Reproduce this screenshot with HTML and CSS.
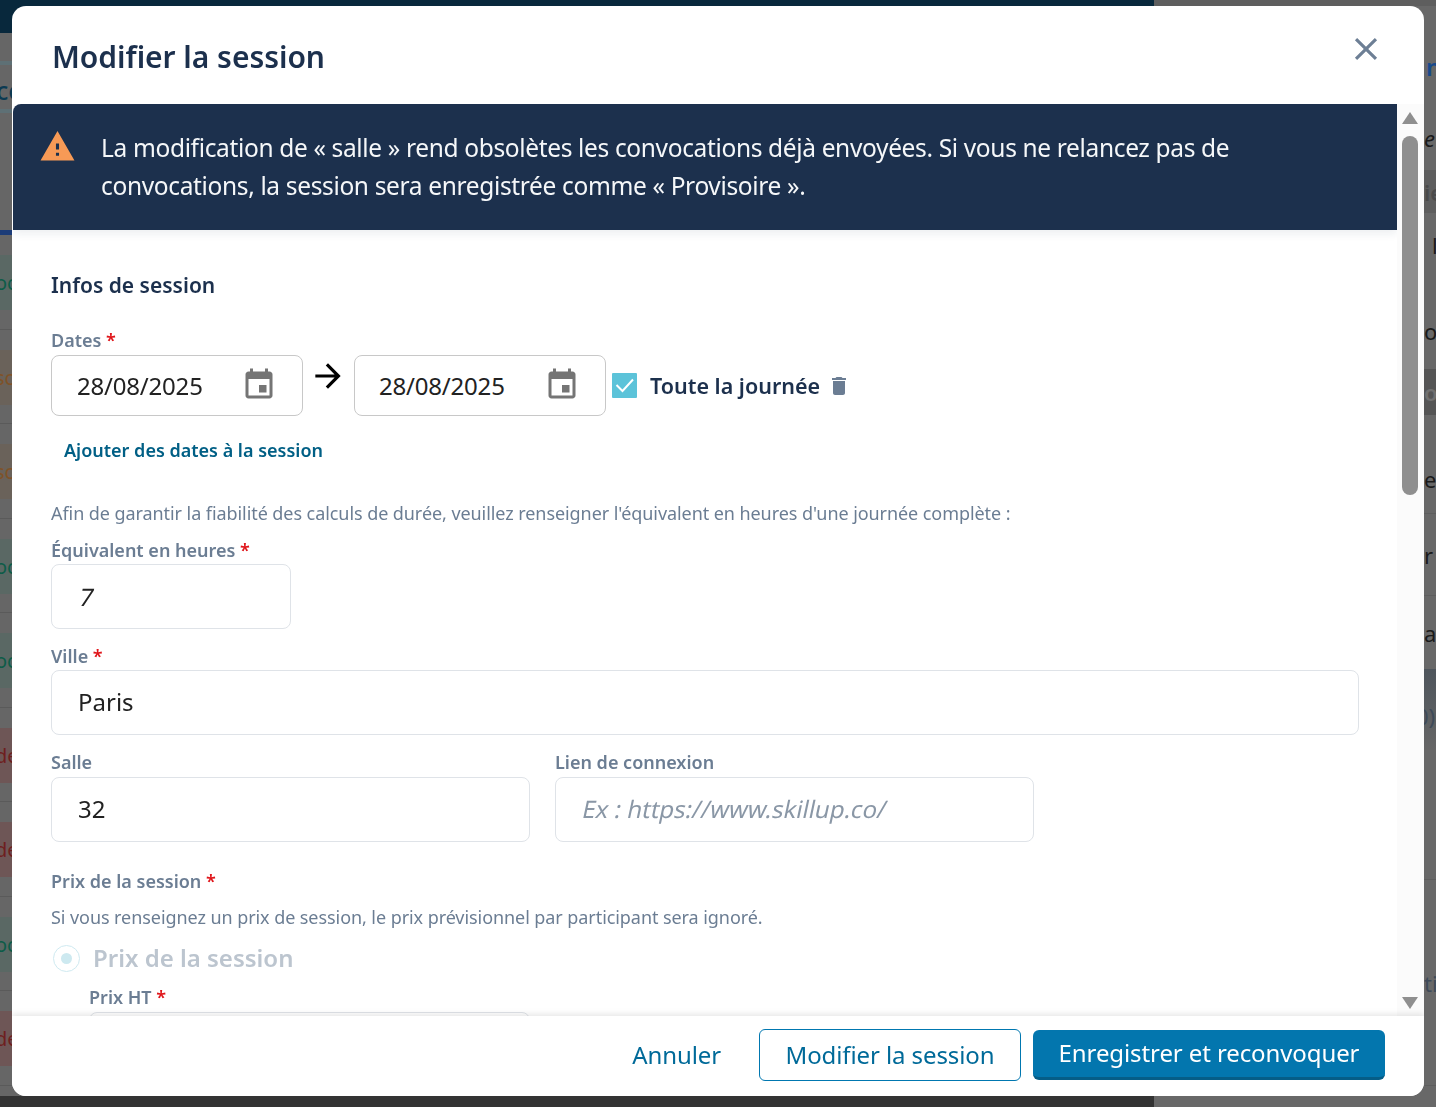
FILE: index.html
```html
<!DOCTYPE html>
<html lang="fr">
<head>
  <meta charset="UTF-8" />
  <title>Modifier la session</title>
  <link rel="stylesheet" href="styles.css">
</head>
<body>
  <div class="page">
    <div class="left-panel">
      <div class="top-bar"><span class="top-title">Sessions</span></div>
      <div class="tabs">
        <div class="tabs-head"></div>
        <div class="tabs-line"><span class="edge edge-big">co</span></div>
        <div class="tabs-rest"></div>
      </div>
      <div class="row"><div class="tint tint-green"><span class="edge c-green">oc</span></div></div>
      <div class="row"><div class="tint tint-brown"><span class="edge c-brown">sc</span></div></div>
      <div class="row"><div class="tint tint-brown"><span class="edge c-brown">sc</span></div></div>
      <div class="row"><div class="tint tint-green"><span class="edge c-green">oc</span></div></div>
      <div class="row"><div class="tint tint-green"><span class="edge c-green">oc</span></div></div>
      <div class="row"><div class="tint tint-red"><span class="edge c-red">de</span></div></div>
      <div class="row"><div class="tint tint-red"><span class="edge c-red">de</span></div></div>
      <div class="row"><div class="tint tint-green"><span class="edge c-green">oc</span></div></div>
      <div class="row"><div class="tint tint-red"><span class="edge c-red">de</span></div></div>
      <div class="bottom-bar"></div>
    </div>
    <div class="right-panel">
      <div class="side side-link"><span class="c-blue">n</span></div>
      <div class="side side-italic"><span>e</span></div>
      <div class="side side-head"><span class="c-faded">ie</span></div>
      <div class="side side-plain"><span>l</span></div>
      <div class="side side-plain2"><span>oe</span></div>
      <div class="side side-head2"><span class="c-faded2">o</span></div>
      <div class="side side-row"><span>er</span></div>
      <div class="side side-row2"><span>r</span></div>
      <div class="side side-row3"><span>ar</span></div>
      <div class="side side-total"><span class="c-slate">0)</span></div>
      <div class="side side-empty"></div>
      <div class="side side-action"><span class="c-slate">ti</span></div>
    </div>
  </div>

  <div class="modal">
    <header class="modal-header">
      <h2>Modifier la session</h2>
      <button class="close-btn" aria-label="Fermer">
        <svg viewBox="0 0 24 24" width="38" height="38"><path d="M19 6.41 17.59 5 12 10.59 6.41 5 5 6.41 10.59 12 5 17.59 6.41 19 12 13.41 17.59 19 19 17.59 13.41 12z"/></svg>
      </button>
    </header>

    <div class="modal-main">
      <div class="modal-content">
        <div class="banner">
          <svg class="banner-icon" viewBox="0 0 24 24" width="37" height="37"><path d="M1 21h22L12 2 1 21zm12-3h-2v-2h2v2zm0-4h-2v-4h2v4z"/></svg>
          <p>La modification de « salle » rend obsolètes les convocations déjà envoyées. Si vous ne relancez pas de convocations, la session sera enregistrée comme « Provisoire ».</p>
        </div>

        <form class="form">
          <h3>Infos de session</h3>

          <div class="label label-dates">Dates <span class="req">*</span></div>
          <div class="dates">
            <div class="input date-input">
              <span>28/08/2025</span>
              <svg viewBox="0 0 24 24" width="36" height="36"><path d="M17 12h-5v5h5v-5zM16 1v2H8V1H6v2H5c-1.11 0-1.99.9-1.99 2L3 19c0 1.1.89 2 2 2h14c1.1 0 2-.9 2-2V5c0-1.1-.9-2-2-2h-1V1h-2zm3 18H5V8h14v11z"/></svg>
            </div>
            <svg class="arrow" viewBox="0 0 24 24" width="38" height="38"><path d="M12 4l-1.41 1.41L16.17 11H4v2h12.17l-5.58 5.59L12 20l8-8z"/></svg>
            <div class="input date-input date-end">
              <span>28/08/2025</span>
              <svg viewBox="0 0 24 24" width="36" height="36"><path d="M17 12h-5v5h5v-5zM16 1v2H8V1H6v2H5c-1.11 0-1.99.9-1.99 2L3 19c0 1.1.89 2 2 2h14c1.1 0 2-.9 2-2V5c0-1.1-.9-2-2-2h-1V1h-2zm3 18H5V8h14v11z"/></svg>
            </div>
            <span class="checkbox">
              <svg viewBox="0 0 25 25" width="25" height="25"><path d="M4.5 12l6 6L21 6.5" fill="none" stroke="#fff" stroke-width="2"/></svg>
            </span>
            <span class="check-label">Toute la journée</span>
            <svg class="trash" viewBox="0 0 24 24" width="24" height="24"><path d="M6 19c0 1.1.9 2 2 2h8c1.1 0 2-.9 2-2V7H6v12zM19 4h-3.5l-1-1h-5l-1 1H5v2h14V4z"/></svg>
          </div>

          <a class="add-dates">Ajouter des dates à la session</a>

          <p class="help help-hours">Afin de garantir la fiabilité des calculs de durée, veuillez renseigner l'équivalent en heures d'une journée complète :</p>

          <div class="label label-hours">Équivalent en heures <span class="req">*</span></div>
          <div class="input input-hours"><span class="slanted">7</span></div>

          <div class="label label-city">Ville <span class="req">*</span></div>
          <div class="input input-city">Paris</div>

          <div class="two-cols">
            <div>
              <div class="label label-room">Salle</div>
              <div class="input input-half">32</div>
            </div>
            <div>
              <div class="label label-room">Lien de connexion</div>
              <div class="input input-half placeholder"><span class="slanted">Ex : https://www.skillup.co/</span></div>
            </div>
          </div>

          <div class="label label-price">Prix de la session <span class="req">*</span></div>
          <p class="help help-price">Si vous renseignez un prix de session, le prix prévisionnel par participant sera ignoré.</p>

          <div class="radio-row">
            <span class="radio"><span class="radio-dot"></span></span>
            <span class="radio-label">Prix de la session</span>
          </div>

          <div class="price-block">
            <div class="label label-ht">Prix HT <span class="req">*</span></div>
            <div class="input input-half"></div>
          </div>
        </form>
      </div>

      <div class="scrollbar">
        <span class="arrow-up"></span>
        <span class="thumb"></span>
        <span class="arrow-down"></span>
      </div>
    </div>

    <footer class="modal-footer">
      <button class="btn btn-text">Annuler</button>
      <button class="btn btn-outline">Modifier la session</button>
      <button class="btn btn-primary">Enregistrer et reconvoquer</button>
    </footer>
  </div>
</body>
</html>
```

FILE: styles.css
```css
* {
  box-sizing: border-box;
}
body {
  margin: 0;
  font-family: "Noto Sans", sans-serif;
  background: #666;
  overflow: hidden;
}
.page {
  display: flex;
  height: 1107px;
  overflow: hidden;
}

/* dimmed page behind the modal */
.left-panel {
  width: 1154px;
  height: 1107px;
  overflow: hidden;
  display: flex;
  flex-direction: column;
}
.top-bar {
  height: 33px;
  flex: none;
  background: #08283c;
  overflow: hidden;
}
.top-title {
  display: block;
  margin-top: -26px;
  font-size: 26px;
  font-weight: 600;
  line-height: 32px;
  color: #9a9a9a;
}
.tabs {
  height: 202px;
  flex: none;
  background: #666;
  border-bottom: 5px solid #1c3c78;
}
.tabs-head {
  height: 28px;
}
.tabs-line {
  height: 52px;
  padding-top: 5px;
  border-top: 4px solid #5e7075;
  border-bottom: 4px solid #5e7075;
  display: flex;
  align-items: center;
}
.edge {
  display: block;
  width: 12px;
  overflow: hidden;
  white-space: nowrap;
  font-size: 20px;
  text-indent: -5px;
}
.edge-big {
  font-size: 25px;
  font-weight: 500;
  color: #0b3a52;
  text-indent: -4px;
}
.row {
  height: 94.5px;
  flex: none;
  padding-top: 20px;
  border-bottom: 1px solid #5a5a5a;
}
.tint {
  height: 55px;
  display: flex;
  align-items: center;
}
.tint-green { background: #5a6864; }
.tint-brown { background: #6a625a; }
.tint-red { background: #6e5656; }
.c-green { color: #0d5c48; }
.c-brown { color: #7f5228; }
.c-red { color: #6e1f1f; }

.bottom-bar {
  height: 30px;
  flex: none;
  margin-top: 10px;
  background: #333;
}
.right-panel {
  width: 282px;
  height: 1107px;
  overflow: hidden;
  background: #686868;
  border-top: 6px solid #5e5e5e;
}
.side {
  display: flex;
  align-items: center;
  padding-left: 270px;
  overflow: hidden;
  white-space: nowrap;
  font-size: 22px;
  color: #1a1a1a;
}
.side-link { height: 120px; padding-left: 272px; font-weight: 600; font-size: 24px; }
.side-italic { height: 24px; font-style: italic; }
.side-head { height: 43px; margin-top: 20px; background: #5e5e5e; font-weight: 600; }
.side-plain { height: 64px; padding-left: 278px; }
.side-plain2 { height: 92px; padding-top: 16px; }
.side-head2 { height: 46px; background: #555; font-weight: 600; }
.side-row { height: 99px; border-bottom: 1px solid #5e5e5e; padding-top: 30px; }
.side-row2 { height: 82px; border-bottom: 1px solid #5e5e5e; }
.side-row3 { height: 73px; }
.side-total { height: 81px; padding-top: 12px; padding-left: 262px; background: linear-gradient(#4e555c, #666); }
.side-empty { height: 130px; border-bottom: 1px solid #5e5e5e; }
.side-action { height: 206px; border-bottom: 1px solid #5e5e5e; }
.c-blue { color: #174a8c; }
.c-faded { color: #4a4a4a; }
.c-faded2 { color: #707070; }
.c-slate { color: #3e4a58; }

/* modal */
.modal {
  position: fixed;
  left: 12px;
  top: 6px;
  width: 1412px;
  height: 1090px;
  background: #fff;
  border-radius: 14px;
  overflow: hidden;
  display: flex;
  flex-direction: column;
}
.modal-header {
  height: 98px;
  flex: none;
  display: flex;
  justify-content: space-between;
  padding: 26px 39px 0 40px;
}
.modal-header h2 {
  margin: 0;
  font-size: 30px;
  line-height: 50px;
  font-weight: 600;
  letter-spacing: -0.03px;
  color: #1c304d;
}
.close-btn {
  width: 38px;
  height: 38px;
  margin-top: -2px;
  padding: 0;
  border: none;
  background: none;
  fill: #6d7f95;
}
.modal-main {
  flex: 1;
  min-height: 0;
  display: flex;
  padding-left: 1px;
}
.modal-content {
  width: 1384px;
  overflow: hidden;
}
.banner {
  height: 126px;
  background: #1c304d;
  border-top-left-radius: 8px;
  box-shadow: 0 4px 8px rgba(28, 48, 77, 0.08);
  display: flex;
  align-items: flex-start;
  padding: 25px 100px 0 26px;
  gap: 25px;
}
.banner-icon {
  flex: none;
  margin-top: -1px;
  fill: #f79a56;
}
.banner p {
  margin: 0;
  font-size: 24.5px;
  line-height: 38px;
  color: #f5f7f9;
  letter-spacing: -0.35px;
}
.form {
  padding: 0 38px;
}
.form h3 {
  margin: 38px 0 0;
  font-size: 21px;
  line-height: 34px;
  font-weight: 600;
  color: #1c304d;
}
.label {
  font-size: 18px;
  line-height: 24px;
  font-weight: 600;
  color: #6b7d93;
}
.req {
  color: #e0161b;
}
.label-dates { margin-top: 26px; margin-bottom: 3px; }
.input {
  display: flex;
  align-items: center;
  border: 1px solid #dfe3e8;
  border-radius: 8px;
  font-size: 24px;
  color: #222;
  padding-left: 26px;
  padding-bottom: 2px;
  background: #fff;
}
.slanted {
  display: inline-block;
  transform: skewX(-12deg);
}
.dates {
  display: flex;
  align-items: center;
}
.date-input {
  width: 252px;
  height: 61px;
  border-color: #c8c8c8;
  justify-content: space-between;
  padding: 0 25px;
  fill: #757575;
  letter-spacing: -0.2px;
}
.date-input svg {
  margin-top: -2px;
}
.date-end {
  padding-left: 24px;
}
.arrow {
  flex: none;
  margin: -20px 7px 0 6px;
  fill: #000;
}
.checkbox {
  width: 25px;
  height: 25px;
  margin-left: 6px;
  background: #5cc3d9;
  border-radius: 1px;
}
.checkbox svg {
  display: block;
}
.check-label {
  margin-left: 13px;
  font-size: 21.5px;
  font-weight: 600;
  color: #1c304d;
}
.trash {
  margin-left: 7px;
  fill: #6b7d93;
}
.add-dates {
  display: block;
  margin: 22px 0 0 13px;
  font-size: 18px;
  line-height: 24px;
  font-weight: 600;
  color: #005f85;
}
.help {
  margin: 0;
  font-size: 18px;
  line-height: 24px;
  letter-spacing: -0.07px;
  color: #6b7d93;
}
.help-hours { margin-top: 39px; }
.label-hours { margin-top: 13px; margin-bottom: 2px; }
.input-hours {
  width: 240px;
  height: 65px;
  padding-left: 28px;
  padding-bottom: 0;
}
.label-city { margin-top: 15px; margin-bottom: 2px; }
.input-city {
  width: 1308px;
  height: 65px;
}
.two-cols {
  display: flex;
  gap: 25px;
}
.label-room { margin-top: 15px; margin-bottom: 3px; }
.input-half {
  width: 479px;
  height: 65px;
}
.placeholder {
  color: #8a97a6;
  padding-left: 27px;
}
.label-price { margin-top: 27px; }
.help-price { margin-top: 12px; }
.radio-row {
  display: flex;
  align-items: center;
  height: 36px;
  margin-top: 11px;
}
.radio {
  width: 27px;
  height: 27px;
  margin-left: 2px;
  border: 1px solid #cfeaf1;
  border-radius: 50%;
  display: flex;
  align-items: center;
  justify-content: center;
}
.radio-dot {
  width: 11px;
  height: 11px;
  border-radius: 50%;
  background: #cde9f0;
}
.radio-label {
  margin-left: 13px;
  margin-top: -2px;
  font-size: 24px;
  font-weight: 600;
  color: #bcc5cf;
}
.price-block {
  margin: 9px 0 0 38px;
}
.label-ht { margin-bottom: 3px; }
.price-block .input-half {
  width: 441px;
}

/* scrollbar */
.scrollbar {
  flex: 1;
  background: #fbfbfb;
  display: flex;
  flex-direction: column;
  align-items: flex-start;
  padding: 8px 0 0 5px;
}
.arrow-up,
.arrow-down {
  width: 0;
  height: 0;
  border-left: 8px solid transparent;
  border-right: 8px solid transparent;
}
.arrow-up {
  border-bottom: 12px solid #8f8f8f;
}
.thumb {
  width: 16px;
  height: 359px;
  margin-top: 12px;
  border-radius: 8px;
  background: #8f8f8f;
}
.arrow-down {
  margin-top: 502px;
  border-top: 12px solid #8f8f8f;
}

/* footer */
.modal-footer {
  height: 80px;
  flex: none;
  position: relative;
  background: #fff;
  box-shadow: 0 -2px 6px rgba(0, 0, 0, 0.1);
  display: flex;
  justify-content: flex-end;
  align-items: center;
  gap: 12px;
  padding: 0 39px 2px 0;
}
.btn {
  font-family: inherit;
  font-size: 24px;
  letter-spacing: -0.1px;
  height: 52px;
  border-radius: 6px;
  padding: 0 0 2px;
  background: none;
  border: none;
  color: #006a99;
}
.btn-text {
  margin-right: 26px;
}
.btn-outline {
  width: 262px;
  border: 1px solid #0077b0;
}
.btn-primary {
  width: 352px;
  height: 50px;
  background: #0376ae;
  border-bottom: 3px solid #055d87;
  color: #fff;
}
```
